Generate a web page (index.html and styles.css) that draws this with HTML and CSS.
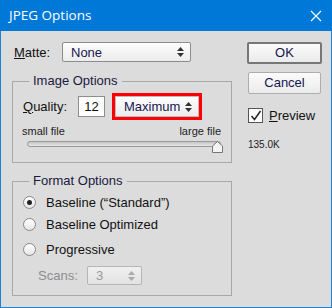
FILE: index.html
```html
<!DOCTYPE html>
<html lang="en">
<head>
  <meta charset="UTF-8">
  <title>JPEG Options</title>
  <link rel="stylesheet" href="styles.css">
</head>
<body>
<div class="window">
  <div class="titlebar">
    <span class="title">JPEG Options</span>
    <svg class="close" width="12" height="12" viewBox="0 0 12 12">
      <path d="M1 1 L11 11 M11 1 L1 11" stroke="#fff" stroke-width="1.1" fill="none"/>
    </svg>
  </div>
  <div class="content">
    <div class="main">
      <div class="matte-row">
        <span class="label"><u>M</u>atte:</span>
        <div class="select matte">
          <span>None</span>
          <svg class="arrows" width="7" height="10" viewBox="0 0 7 10"><path d="M3.5 0 L7 4 L0 4 Z M0 6 L7 6 L3.5 10 Z" fill="#333"/></svg>
        </div>
      </div>

      <fieldset class="group image-group">
        <legend>Image Options</legend>
        <div class="quality-row">
          <span class="label"><u>Q</u>uality:</span>
          <div class="field">12</div>
          <div class="select max">
            <span>Maximum</span>
            <svg class="arrows" width="7" height="10" viewBox="0 0 7 10"><path d="M3.5 0 L7 4 L0 4 Z M0 6 L7 6 L3.5 10 Z" fill="#333"/></svg>
          </div>
        </div>
        <div class="slider-labels"><span>small file</span><span>large file</span></div>
        <div class="slider">
          <div class="track"></div>
          <svg class="thumb" width="11" height="12" viewBox="0 0 11 12">
            <path d="M0.5 11.5 L0.5 5 L5.5 0.5 L10.5 5 L10.5 11.5 Z" fill="#f4f4f4" stroke="#777"/>
          </svg>
        </div>
      </fieldset>

      <fieldset class="group format-group">
        <legend>Format Options</legend>
        <div class="radio-row first"><span class="radio checked"></span><span>Baseline (“Standard”)</span></div>
        <div class="radio-row"><span class="radio"></span><span>Baseline Optimized</span></div>
        <div class="radio-row last"><span class="radio"></span><span>Progressive</span></div>
        <div class="scans-row">
          <span class="label">Scans:</span>
          <div class="select scans">
            <span>3</span>
            <svg class="arrows" width="7" height="10" viewBox="0 0 7 10"><path d="M3.5 0 L7 4 L0 4 Z M0 6 L7 6 L3.5 10 Z" fill="#aaa"/></svg>
          </div>
        </div>
      </fieldset>
    </div>

    <div class="side">
      <div class="button ok">OK</div>
      <div class="button cancel">Cancel</div>
      <div class="preview">
        <span class="checkbox">
          <svg width="12" height="12" viewBox="0 0 12 12"><path d="M1.5 6 L4.5 9.5 L10.5 1" stroke="#222" stroke-width="1.5" fill="none"/></svg>
        </span>
        <span><u>P</u>review</span>
      </div>
      <div class="size">135.0K</div>
    </div>
  </div>
</div>
</body>
</html>
```

FILE: styles.css
```css
body {
  margin: 0;
  font-family: "Liberation Sans", Arial, sans-serif;
  font-size: 13px;
  color: #111;
}
.window {
  width: 332px;
  height: 308px;
  box-sizing: border-box;
  border: 1px solid #1883d7;
  border-top: none;
  background: #dcdcdc;
}
.titlebar {
  height: 31px;
  margin: 0 -1px;
  background: #0078d7;
  display: flex;
  align-items: center;
  justify-content: space-between;
  padding: 0 10px 0 9px;
}
.title {
  color: #fff;
  font-family: "Open Sans", sans-serif;
  font-size: 13.5px;
  padding-bottom: 1px;
}
.content {
  display: flex;
  padding: 11px 0 0 11px;
}
.main {
  width: 220px;
}
.matte-row {
  display: flex;
  align-items: center;
  height: 20px;
}
.label u {
  text-decoration-thickness: 1px;
}
.matte-row .label {
  margin-left: 2px;
  width: 48px;
}
.select {
  display: flex;
  align-items: center;
  justify-content: space-between;
  box-sizing: border-box;
  border: 1px solid #8d8d8d;
  border-radius: 2px;
  background: linear-gradient(#fdfdfd, #ececec);
  color: #161650;
  padding: 0 6px 0 8px;
}
.matte {
  width: 129px;
  height: 20px;
}
.group {
  margin: 11px 0 0;
  padding: 0;
  width: 220px;
  box-sizing: border-box;
  border: 1px solid #a8a8a8;
  min-inline-size: 0;
}
.group legend {
  margin-left: 16px;
  padding: 0 4px;
  color: #1a1a40;
  line-height: 16px;
}
.quality-row {
  display: flex;
  align-items: center;
  margin-top: 7px;
  padding-left: 10px;
}
.quality-row .label {
  width: 55px;
}
.field {
  width: 27px;
  height: 21px;
  box-sizing: border-box;
  border: 1px solid #8d8d8d;
  background: #fff;
  text-align: center;
  line-height: 19px;
}
.max {
  width: 84px;
  height: 21px;
  margin-left: 10px;
  border-radius: 0;
  outline: 3px solid #f00;
  outline-offset: 0;
  border-color: #bbb;
}
.slider-labels {
  display: flex;
  justify-content: space-between;
  font-size: 11px;
  margin: 8px 10px 0 9px;
  color: #222;
}
.slider {
  position: relative;
  height: 12px;
  margin: 1px 10px 9px 14px;
}
.track {
  margin-top: 4px;
  height: 4px;
  border: 1px solid #9a9a9a;
  border-radius: 3px;
  background: linear-gradient(#c4c4c4, #e6e6e6);
}
.thumb {
  position: absolute;
  right: -2px;
  top: 0;
}
.format-group {
  margin-top: 10px;
  padding-bottom: 10px;
}
.radio-row {
  display: flex;
  align-items: center;
  gap: 10px;
  padding-left: 10px;
  height: 22px;
}
.radio-row.first {
  margin-top: 2px;
}
.radio-row.last {
  margin-top: 3px;
}
.radio {
  width: 13px;
  height: 13px;
  box-sizing: border-box;
  border: 1px solid #888;
  border-radius: 50%;
  background: linear-gradient(#fff, #e6e6e6);
  display: flex;
  align-items: center;
  justify-content: center;
}
.radio.checked::after {
  content: "";
  width: 5px;
  height: 5px;
  border-radius: 50%;
  background: #222;
}
.scans-row {
  display: flex;
  align-items: center;
  margin-top: 6px;
  padding-left: 25px;
  color: #8d8d8d;
}
.scans-row .label {
  width: 49px;
}
.scans {
  width: 55px;
  height: 19px;
  border-color: #b5b5b5;
  color: #999;
  background: linear-gradient(#f0f0f0, #e2e2e2);
}
.side {
  margin-left: 15px;
  width: 75px;
}
.button {
  box-sizing: border-box;
  text-align: center;
  border: 1px solid #adadad;
  border-radius: 2px;
  background: linear-gradient(#fbfbfb, #ebebeb);
  color: #141450;
}
.ok {
  width: 75px;
  height: 22px;
  line-height: 18px;
  border: 2px solid #777;
}
.cancel {
  width: 73px;
  height: 22px;
  line-height: 20px;
  margin: 8px 0 0 1px;
}
.preview {
  display: flex;
  align-items: center;
  gap: 6px;
  margin-top: 14px;
  margin-left: 1px;
}
.checkbox {
  width: 15px;
  height: 15px;
  box-sizing: border-box;
  border: 1px solid #555;
  background: #fff;
  display: flex;
  align-items: center;
  justify-content: center;
}
.size {
  font-size: 10px;
  margin: 16px 0 0 1px;
  color: #222;
}
```
